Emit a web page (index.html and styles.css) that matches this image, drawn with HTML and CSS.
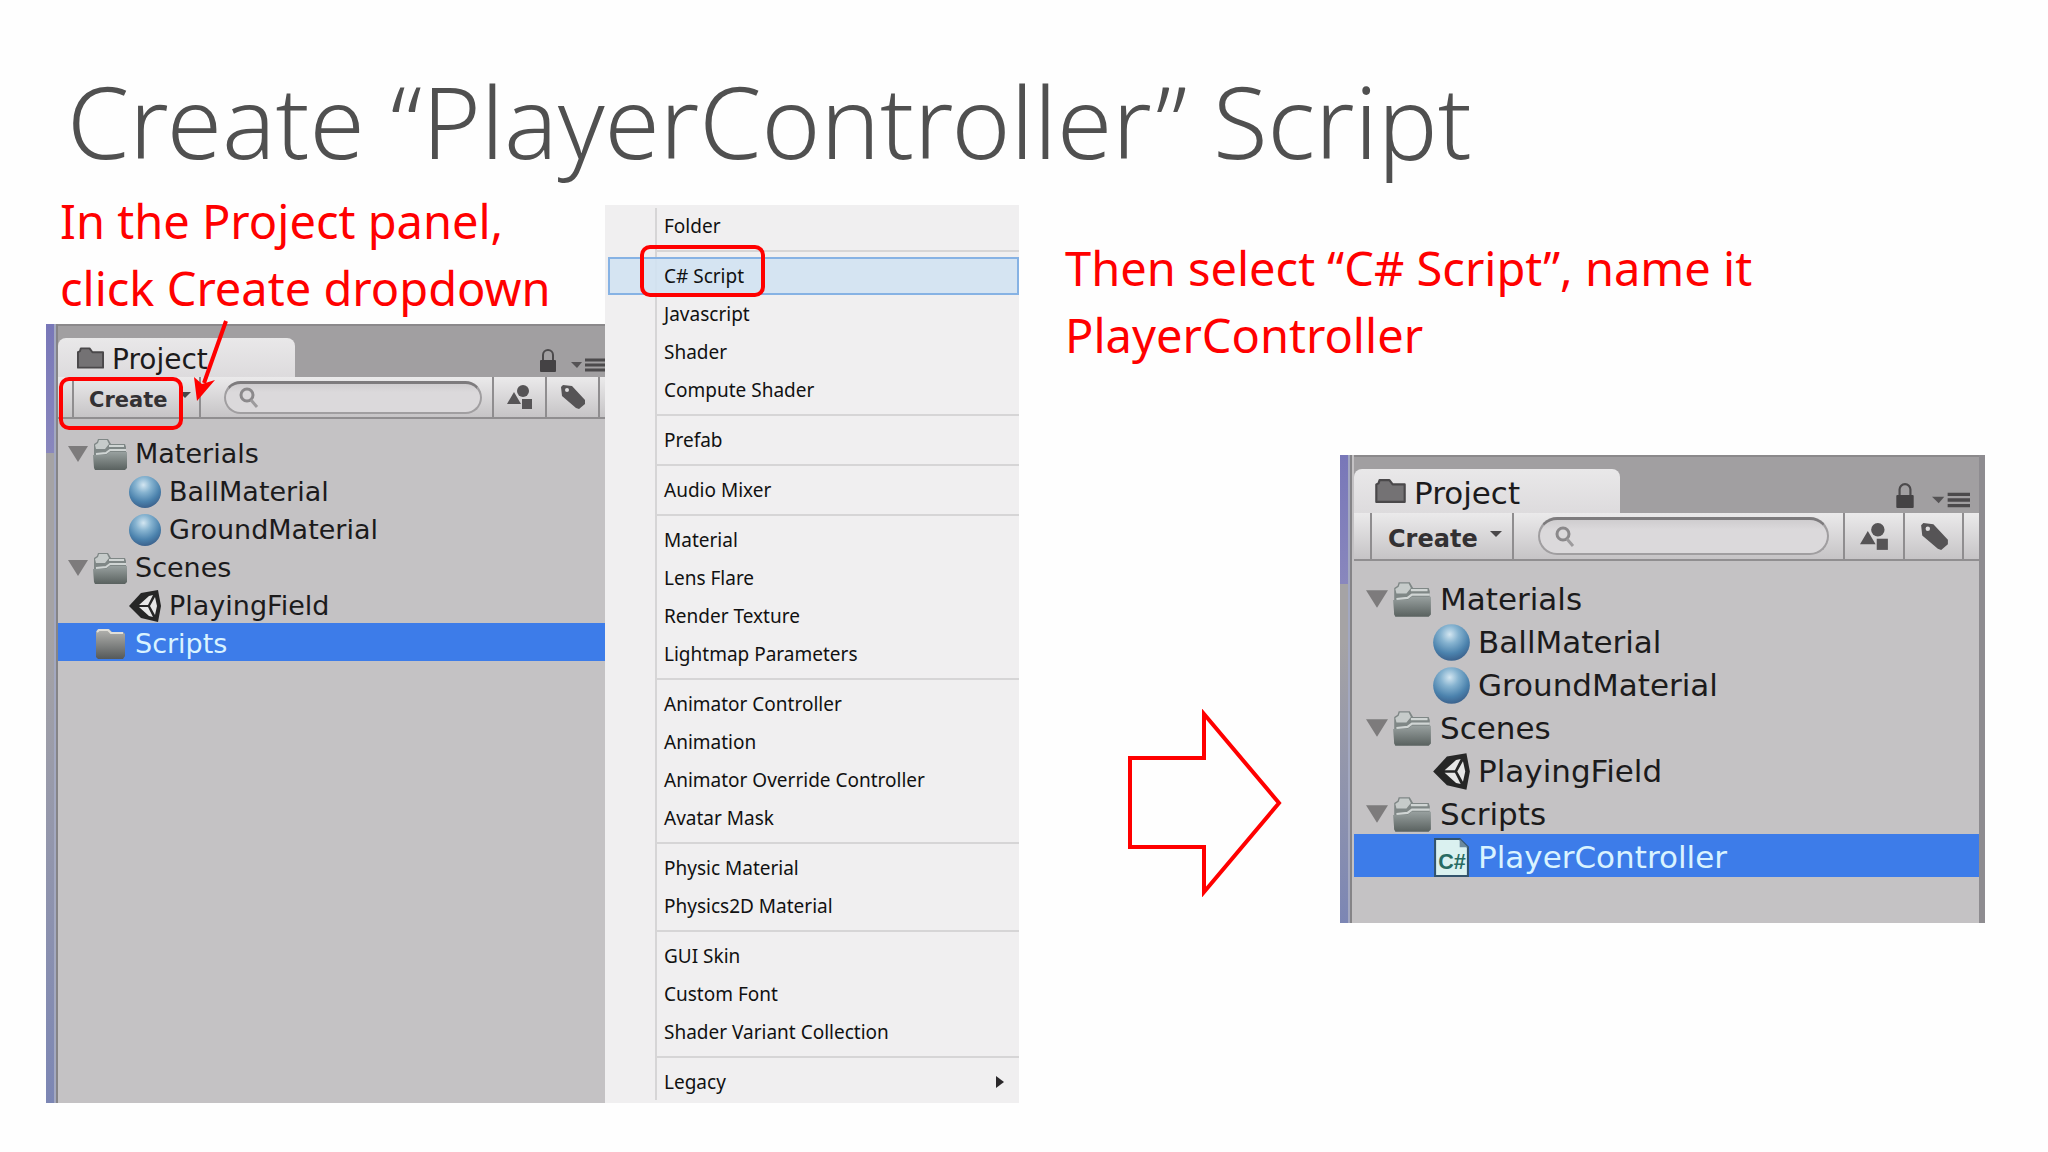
FILE: index.html
```html
<!DOCTYPE html>
<html lang="en">
<head>
<meta charset="utf-8">
<meta name="viewport" content="width=device-width, initial-scale=1">
<title>Create “PlayerController” Script</title>
<link rel="stylesheet" href="styles.css">
</head>
<body>
<svg class="sprites" aria-hidden="true">
  <defs>
    <linearGradient id="folder-fill" x1="0" y1="0" x2="0" y2="1">
      <stop offset="0" stop-color="#98a09f"/><stop offset="1" stop-color="#59615f"/>
    </linearGradient>
    <linearGradient id="closed-fill" x1="0" y1="0" x2="0" y2="1">
      <stop offset="0" stop-color="#b4b4b0"/><stop offset="1" stop-color="#55595a"/>
    </linearGradient>
    <radialGradient id="ball-fill" cx="0.45" cy="0.28" r="0.7">
      <stop offset="0" stop-color="#d3e6f1"/><stop offset="0.35" stop-color="#86b3d0"/><stop offset="0.75" stop-color="#4b82ad"/><stop offset="1" stop-color="#3d6590"/>
    </radialGradient>
    <symbol id="tab-folder" viewBox="0 0 28 22">
      <path d="M1 21V5l2-1 1-3h9l3 4h11v16z" fill="#747274" stroke="#4a484a" stroke-width="2" stroke-linejoin="round"/>
    </symbol>
    <symbol id="lock" viewBox="0 0 18 23">
      <path d="M4 11V6a5 5 0 0 1 10 0v5" fill="none" stroke="#4c4a4c" stroke-width="2"/>
      <rect x="1" y="11" width="16" height="12" rx="1" fill="#444244"/>
    </symbol>
    <symbol id="options" viewBox="0 0 34 14">
      <path d="M0 4h11l-5 6z" fill="#555355"/>
      <path d="M14 2h20M14 7h20M14 12h20" stroke="#4c4a4c" stroke-width="3"/>
    </symbol>
    <symbol id="caret" viewBox="0 0 12 8">
      <path d="M0 1h12L6 7z" fill="#4a484a"/>
    </symbol>
    <symbol id="magnifier" viewBox="0 0 22 22">
      <circle cx="9" cy="8" r="6" fill="none" stroke="#8b898b" stroke-width="3"/>
      <path d="M13 13l6 7" stroke="#9d9b9d" stroke-width="3"/>
    </symbol>
    <symbol id="shapes" viewBox="0 0 26 26">
      <circle cx="16" cy="7" r="6" fill="#565456"/>
      <path d="M7 8l7 12H0z" fill="#565456"/>
      <rect x="15" y="15" width="10" height="10" fill="#565456"/>
    </symbol>
    <symbol id="tag" viewBox="0 0 26 26">
      <path fill-rule="evenodd" d="M1 3l2-2 9 1 13 14v4l-6 5-3-1L2 12zM5 6a2 2 0 1 0 4 0a2 2 0 1 0-4 0z" fill="#565456"/>
    </symbol>
    <symbol id="open-folder" viewBox="0 0 36 32">
      <path d="M2 30V6l3-2 1-3h10l3 5h14l1 3v20z" fill="#7f8786"/>
      <path d="M3 7l3-2 1-3h8l2 4-4 5H4z" fill="#c6cbca"/>
      <path d="M17 8h15M4 16l10-1 4-3h16" fill="none" stroke="#d0d5d4" stroke-width="2"/>
      <path d="M1 17h13l4-3h17v16l-2 2H3l-1-2z" fill="url(#folder-fill)"/>
    </symbol>
    <symbol id="closed-folder" viewBox="0 0 36 32">
      <path d="M4 29V4l2-3h11l3 3h11l2 2v22l-2 3H6z" fill="url(#closed-fill)"/>
      <path d="M5 4l2-2h9l3 3h12" fill="none" stroke="#e1dfd8" stroke-width="2"/>
    </symbol>
    <symbol id="ball" viewBox="0 0 34 34">
      <circle cx="17" cy="17" r="16" fill="url(#ball-fill)"/>
    </symbol>
    <symbol id="unity" viewBox="0 0 34 34">
      <path d="M1 17L13 4 30 1l3 16-3 16-17-4z" fill="#262626"/>
      <path d="M20 16h-9l10-9 4-1zM20 18h-9l10 9 4 1zM27 8l2 9-2 9-5-9z" fill="#e6e6e6"/>
    </symbol>
    <symbol id="csharp" viewBox="0 0 34 38">
      <path d="M1 1h24l8 8v28H1z" fill="#daf1f0" stroke="#33536c" stroke-width="2"/>
      <path d="M25 1v8h8z" fill="#6d8a9c"/>
      <text x="4" y="30" font-family="Liberation Sans, sans-serif" font-size="21" font-weight="700" fill="#286b62">C#</text>
    </symbol>
    <symbol id="fold" viewBox="0 0 20 18">
      <path d="M0 1h20L10 17z" fill="#7d7b7c"/>
    </symbol>
  </defs>
</svg>

<h1 class="title">Create “PlayerController” Script</h1>

<main class="slide">
  <section class="step">
    <p class="caption">In the Project panel,<br>click Create dropdown</p>
    <div class="panel">
      <div class="tabbar">
        <button class="tab" type="button"><svg class="tab-icon"><use href="#tab-folder"/></svg>Project</button>
        <svg class="lock"><use href="#lock"/></svg>
        <svg class="options"><use href="#options"/></svg>
      </div>
      <div class="toolbar">
        <button class="create" type="button">Create<svg class="caret"><use href="#caret"/></svg></button>
        <div class="search"><svg class="magnifier"><use href="#magnifier"/></svg><input type="search" aria-label="Search assets"></div>
        <button class="tool" type="button" aria-label="Filter by type"><svg class="tool-icon"><use href="#shapes"/></svg></button>
        <button class="tool" type="button" aria-label="Filter by label"><svg class="tool-icon"><use href="#tag"/></svg></button>
      </div>
      <ul class="tree">
        <li class="row"><svg class="fold"><use href="#fold"/></svg><svg class="folder"><use href="#open-folder"/></svg>Materials</li>
        <li class="row child"><svg class="asset"><use href="#ball"/></svg>BallMaterial</li>
        <li class="row child"><svg class="asset"><use href="#ball"/></svg>GroundMaterial</li>
        <li class="row"><svg class="fold"><use href="#fold"/></svg><svg class="folder"><use href="#open-folder"/></svg>Scenes</li>
        <li class="row child"><svg class="asset"><use href="#unity"/></svg>PlayingField</li>
        <li class="row selected"><span class="fold"></span><svg class="folder"><use href="#closed-folder"/></svg>Scripts</li>
      </ul>
      <div class="mark mark-create"></div>
      <svg class="pointer" viewBox="0 0 40 84" aria-hidden="true">
        <path d="M34 2L12 64" stroke="#f00" stroke-width="4"/>
        <path d="M2 58l8 7 13-4L5 82z" fill="#f00"/>
      </svg>
    </div>
  </section>

  <menu class="menu">
    <li><button class="item" type="button">Folder</button></li>
    <li class="line"></li>
    <li class="marked"><button class="item current" type="button">C# Script</button><div class="mark mark-script"></div></li>
    <li><button class="item" type="button">Javascript</button></li>
    <li><button class="item" type="button">Shader</button></li>
    <li><button class="item" type="button">Compute Shader</button></li>
    <li class="line"></li>
    <li><button class="item" type="button">Prefab</button></li>
    <li class="line"></li>
    <li><button class="item" type="button">Audio Mixer</button></li>
    <li class="line"></li>
    <li><button class="item" type="button">Material</button></li>
    <li><button class="item" type="button">Lens Flare</button></li>
    <li><button class="item" type="button">Render Texture</button></li>
    <li><button class="item" type="button">Lightmap Parameters</button></li>
    <li class="line"></li>
    <li><button class="item" type="button">Animator Controller</button></li>
    <li><button class="item" type="button">Animation</button></li>
    <li><button class="item" type="button">Animator Override Controller</button></li>
    <li><button class="item" type="button">Avatar Mask</button></li>
    <li class="line"></li>
    <li><button class="item" type="button">Physic Material</button></li>
    <li><button class="item" type="button">Physics2D Material</button></li>
    <li class="line"></li>
    <li><button class="item" type="button">GUI Skin</button></li>
    <li><button class="item" type="button">Custom Font</button></li>
    <li><button class="item" type="button">Shader Variant Collection</button></li>
    <li class="line"></li>
    <li><button class="item" type="button">Legacy<svg class="submenu" viewBox="0 0 8 12"><path d="M0 0l8 6-8 6z" fill="#2a282a"/></svg></button></li>
  </menu>

  <section class="outcome">
    <p class="caption">Then select “C# Script”, name it<br>PlayerController</p>
    <div class="result">
      <svg class="arrow" viewBox="0 0 156 188" aria-hidden="true">
        <path d="M3 49h74V5l75 89-75 89v-45H3z" fill="none" stroke="#f00" stroke-width="4"/>
      </svg>
      <div class="panel large">
        <div class="tabbar">
          <button class="tab" type="button"><svg class="tab-icon"><use href="#tab-folder"/></svg>Project</button>
          <svg class="lock"><use href="#lock"/></svg>
          <svg class="options"><use href="#options"/></svg>
        </div>
        <div class="toolbar">
          <button class="create" type="button">Create<svg class="caret"><use href="#caret"/></svg></button>
          <div class="search"><svg class="magnifier"><use href="#magnifier"/></svg><input type="search" aria-label="Search assets"></div>
          <button class="tool" type="button" aria-label="Filter by type"><svg class="tool-icon"><use href="#shapes"/></svg></button>
          <button class="tool" type="button" aria-label="Filter by label"><svg class="tool-icon"><use href="#tag"/></svg></button>
        </div>
        <ul class="tree">
          <li class="row"><svg class="fold"><use href="#fold"/></svg><svg class="folder"><use href="#open-folder"/></svg>Materials</li>
          <li class="row child"><svg class="asset"><use href="#ball"/></svg>BallMaterial</li>
          <li class="row child"><svg class="asset"><use href="#ball"/></svg>GroundMaterial</li>
          <li class="row"><svg class="fold"><use href="#fold"/></svg><svg class="folder"><use href="#open-folder"/></svg>Scenes</li>
          <li class="row child"><svg class="asset"><use href="#unity"/></svg>PlayingField</li>
          <li class="row"><svg class="fold"><use href="#fold"/></svg><svg class="folder"><use href="#open-folder"/></svg>Scripts</li>
          <li class="row child selected"><svg class="asset"><use href="#csharp"/></svg>PlayerController</li>
        </ul>
      </div>
    </div>
  </section>
</main>
</body>
</html>
```
FILE: styles.css
```css
* { box-sizing: border-box; }

body {
  margin: 0;
  background: #fefefe;
  font-family: "Noto Sans", "Open Sans", sans-serif;
}

button {
  margin: 0;
  padding: 0;
  border: 0;
  background: none;
  color: inherit;
  font: inherit;
  text-align: left;
}

svg { display: block; flex: none; }

.sprites { position: absolute; width: 0; height: 0; }

.title {
  margin: 0;
  padding: 52px 67px 0;
  color: #505050;
  font-size: 100px;
  font-weight: 300;
  line-height: 136px;
}

.slide {
  display: grid;
  grid-template-columns: minmax(0, 559fr) minmax(0, 414fr) minmax(0, 966fr);
  padding: 0 63px 48px 46px;
}

.caption {
  margin: 0;
  color: #f00;
  font-size: 47px;
  line-height: 67px;
}

.step { display: flex; flex-direction: column; }
.step .caption { padding: 0 0 2px 14px; }
.outcome .caption { padding: 47px 0 0 46px; }

/* Project panel */
.panel {
  --tabbar: 53px;
  --tab: 237px;
  --toolbar: 42px;
  --text: 27px;
  --tab-text: 28px;
  --create-text: 21px;
  --row: 38px;
  position: relative;
  flex: 1;
  min-width: 0;
  padding-left: 12px;
  background:
    linear-gradient(#7877b8, #8987bd) 0 0 / 8px 129px no-repeat,
    linear-gradient(#a5a3a5 40%, #7c86b4) 0 0 / 8px 100% no-repeat,
    linear-gradient(90deg, #a3a8c0 0 10px, #858487 10px 12px, #c4c2c4 12px);
  color: #1c1b1c;
  font-family: "DejaVu Sans", sans-serif;
  font-size: var(--text);
}

.tabbar {
  display: flex;
  align-items: flex-end;
  height: var(--tabbar);
  border-top: 2px solid #8b898b;
  background: #a19fa1;
}

.tab {
  display: flex;
  align-items: center;
  gap: 8px;
  width: var(--tab);
  height: calc(var(--tabbar) - 14px);
  margin-right: auto;
  padding: 4px 0 0 19px;
  border-radius: 8px 8px 0 0;
  background: linear-gradient(#e9e8e9, #dddbdd);
  font-size: var(--tab-text);
}

.tab-icon { width: 27px; height: 22px; margin-bottom: 4px; }
.lock { width: 18px; height: 23px; margin: 0 14px 5px 0; }
.options { width: 34px; height: 14px; margin-bottom: 5px; }

.toolbar {
  display: flex;
  align-items: stretch;
  height: var(--toolbar);
  border-bottom: 2px solid #908e90;
  background: linear-gradient(#ebeaeb, #c6c4c6);
}

.create {
  display: flex;
  flex: none;
  align-items: center;
  gap: 12px;
  width: 129px;
  margin-left: 14px;
  padding: 5px 0 0 15px;
  border: solid #8f8d8f;
  border-width: 0 2px;
  color: #333133;
  font-size: var(--create-text);
  font-weight: 700;
}

.caret { width: 12px; height: 8px; margin-bottom: 10px; }

.search {
  display: flex;
  flex: 1;
  align-items: center;
  min-width: 0;
  margin: 4px 10px 3px 23px;
  padding: 0 12px;
  border: 2px solid #a09ea0;
  border-top: 3px solid #7d7b7d;
  border-radius: 20px;
  background: linear-gradient(#cfcdcf, #dbd9db 30%);
}

.search input {
  flex: 1;
  width: 0;
  min-width: 0;
  border: 0;
  outline: 0;
  background: none;
  font: inherit;
  font-size: 20px;
}

.magnifier { width: 22px; height: 22px; }

.tool {
  display: flex;
  flex: none;
  align-items: center;
  justify-content: center;
  width: 53px;
  border-left: 2px solid #8f8d8f;
}

.tool:last-child {
  width: 60px;
  padding-right: 6px;
  background: linear-gradient(#8f8d8f, #8f8d8f) right 5px top / 2px 100% no-repeat;
}

.tool-icon { width: 26px; height: 26px; }

.tree { margin: 0; padding: 14px 0 0; list-style: none; }

.row {
  display: flex;
  align-items: center;
  height: var(--row);
  padding: 3px 0 0 10px;
  white-space: nowrap;
}

.child { padding-left: 70px; }
.selected { background: #3d7ce9; color: #d9f3ff; }

.fold { flex: none; width: 20px; height: 18px; margin-right: 4px; }
.folder { width: 36px; height: 32px; margin-right: 7px; }
.asset { width: 34px; height: 34px; margin-right: 7px; }

.large {
  --tabbar: 58px;
  --tab: 266px;
  --toolbar: 48px;
  --text: 31px;
  --tab-text: 31px;
  --create-text: 24px;
  --row: 43px;
  padding-left: 14px;
  padding-bottom: 46px;
  border-right: 6px solid #8e8c90;
}

.large .tab { padding-left: 21px; }
.large .tab-icon { width: 31px; height: 24px; }
.large .lock { width: 20px; height: 25px; margin-right: 17px; }
.large .options { width: 38px; height: 16px; margin-right: 9px; }
.large .create { width: 144px; margin-left: 16px; padding-left: 16px; }
.large .search { margin: 4px 14px 4px 24px; padding: 0 14px; border-radius: 24px; }
.large .tool { width: 60px; }
.large .tool:last-child { width: 76px; padding-right: 16px; background-position: right 15px top; }
.large .tool-icon { width: 29px; height: 29px; }
.large .tree { padding-top: 15px; }
.large .row { padding-left: 12px; }
.large .child { padding-left: 78px; }
.large .fold { width: 22px; height: 20px; }
.large .folder { width: 40px; height: 36px; margin-right: 8px; }
.large .asset { width: 39px; height: 39px; margin-right: 7px; }

/* Annotations drawn over the panels */
.mark {
  position: absolute;
  border: 4px solid #f00;
  border-radius: 10px;
  pointer-events: none;
}

.mark-create { left: 13px; top: 53px; width: 124px; height: 53px; }
.mark-script { left: 35px; top: -12px; width: 125px; height: 52px; }
.pointer { position: absolute; left: 146px; top: -5px; width: 40px; height: 84px; }

/* Asset menu */
.menu {
  margin: 17px 0 0;
  padding: 2px 0;
  background: linear-gradient(90deg, transparent 50px, #d6d5d6 50px 52px, transparent 52px) 0 3px / 100% calc(100% - 6px) no-repeat #f0eff0;
  color: #111;
  font-size: 19px;
  list-style: none;
}

.marked { position: relative; }

.item {
  display: flex;
  align-items: center;
  justify-content: space-between;
  width: calc(100% - 3px);
  height: 38px;
  margin-left: 3px;
  padding: 0 14px 0 55px;
  border: 1px solid transparent;
}

.current { border: 2px solid #86b2e4; padding-left: 54px; background: #d1e2f2dd; }
.submenu { width: 8px; height: 12px; }

.line { height: 12px; margin-left: 52px; padding-top: 5px; }
.line::before { content: ""; display: block; height: 2px; background: #d6d5d6; }

.result {
  display: flex;
  align-items: stretch;
  gap: 57px;
  margin-top: 86px;
  padding-left: 108px;
}

.arrow { width: 156px; height: 188px; align-self: flex-end; margin-bottom: 26px; }
```
